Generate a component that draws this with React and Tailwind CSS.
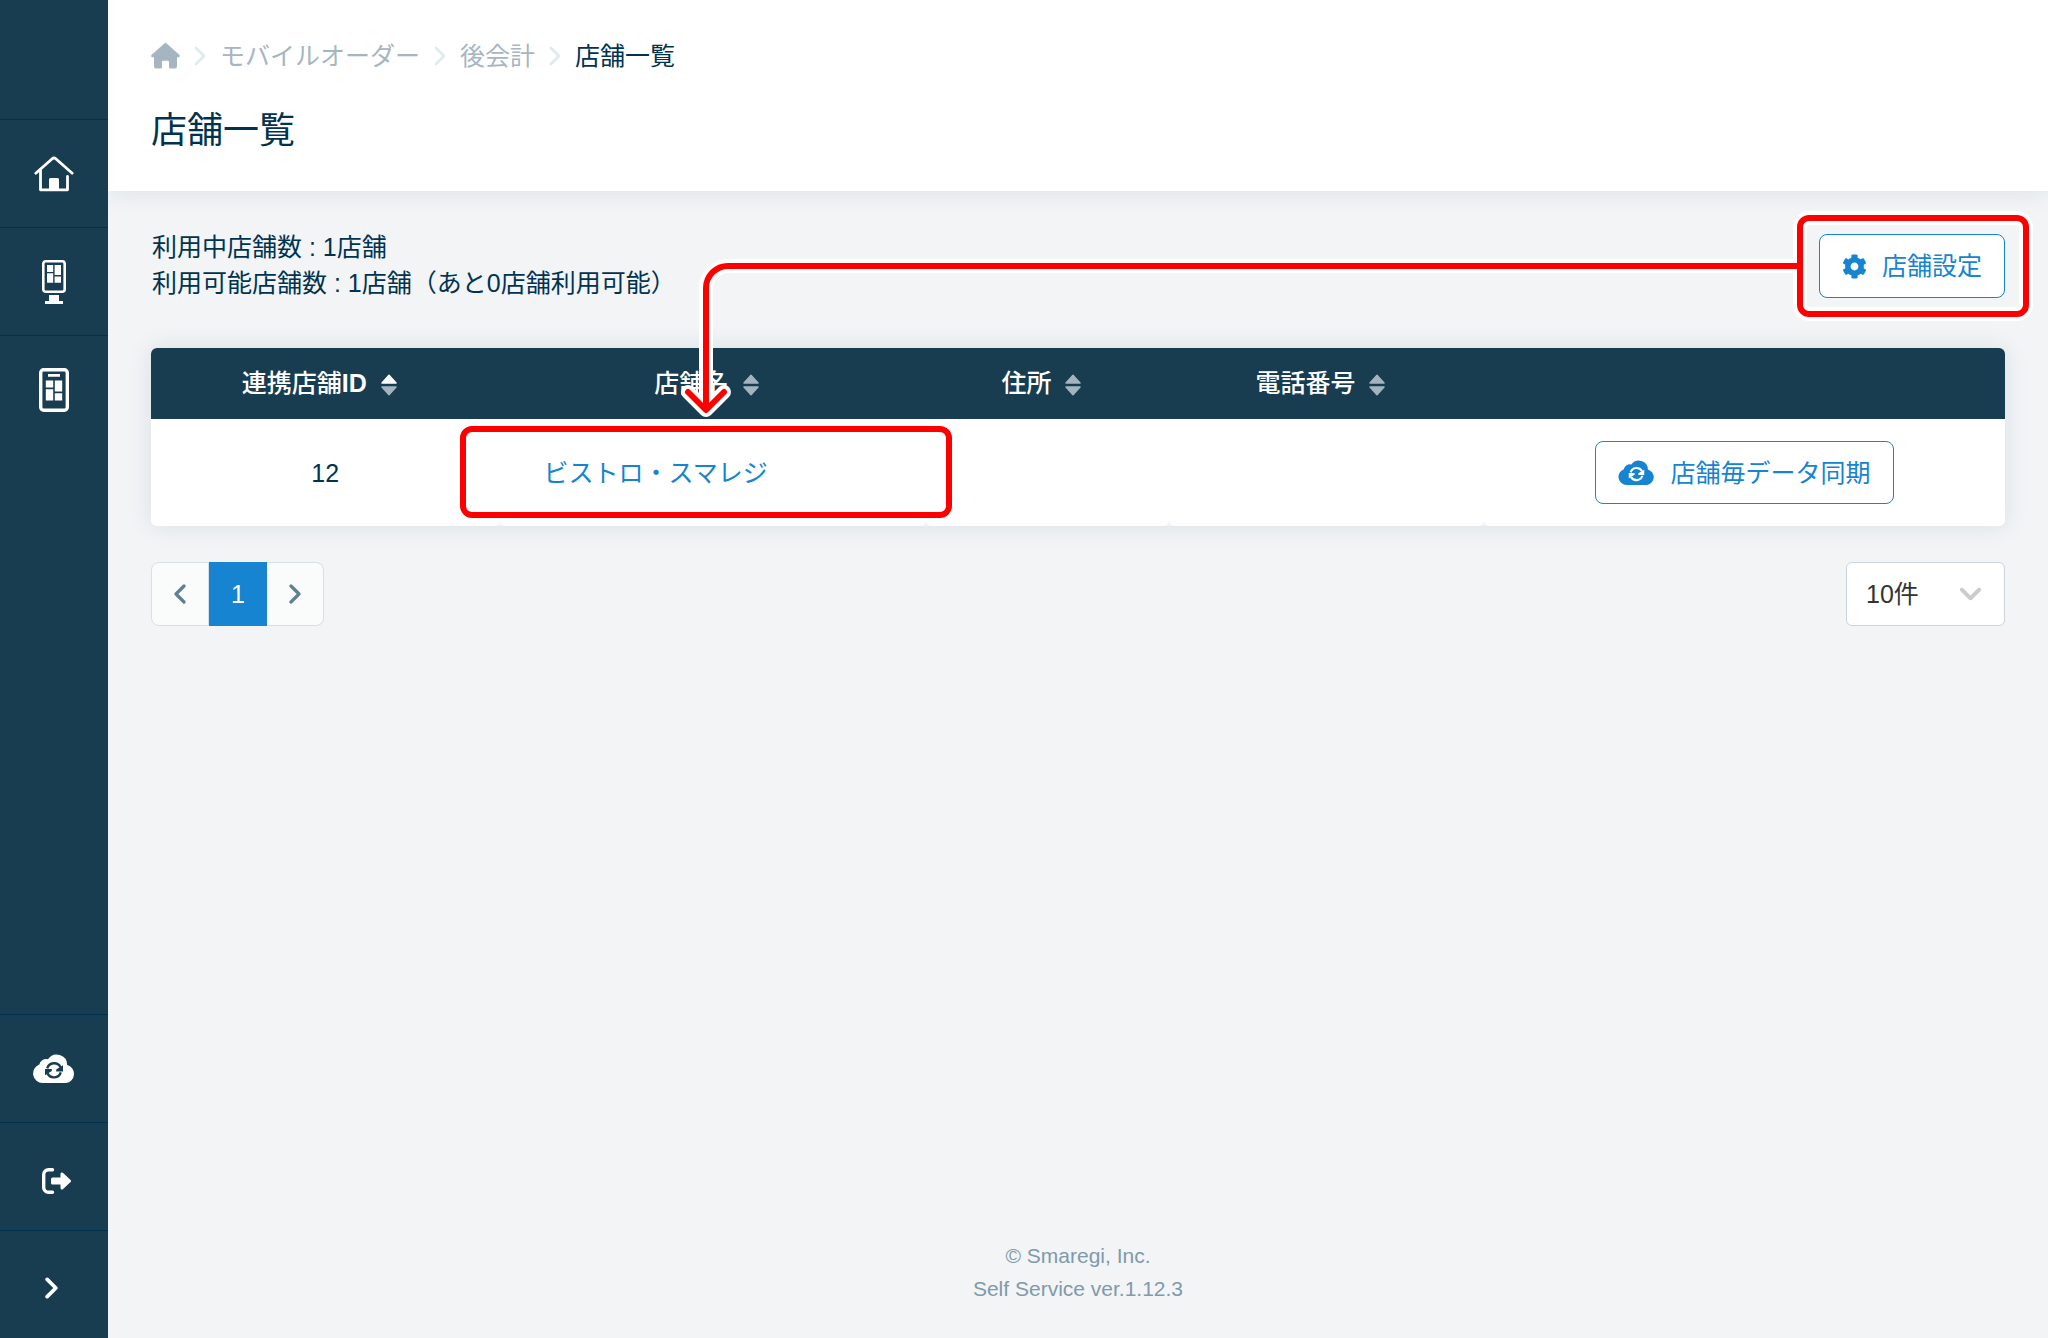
import React, { useState } from 'react';
import { FaCog } from 'react-icons/fa';

const HomeIcon = () => (
  <svg width="40" height="36" viewBox="0 0 40 36" fill="none" stroke="white" strokeWidth="2.8" strokeLinecap="round" strokeLinejoin="round">
    <path d="M1.8 17.2 18.2 2.800a2.700 2.700 0 0 1 3.600 0L38.200 17.200" />
    <path d="M6.500 14v19.800h27V20.500" />
    <path d="M15 35V23.500a1.500 1.500 0 0 1 1.500-1.500h7a1.500 1.500 0 0 1 1.500 1.500V35z" fill="white" stroke="none" />
  </svg>
);

const KioskIcon = () => (
  <svg width="24" height="44" viewBox="0 0 24 44" fill="white">
    <rect x="1.3" y="1.3" width="21.4" height="30.4" rx="2.5" fill="none" stroke="white" strokeWidth="2.600" />
    <path d="M5 5h6.200v7H5zM12.600 5h6.400v10h-6.400zM5 13.300h6.200v9.500H5zM12.600 16.500h6.400v6.300h-6.400z" />
    <path d="M7 35h10v6h4v3H3v-3h4z" />
  </svg>
);

const MobileIcon = () => (
  <svg width="30" height="44" viewBox="0 0 30 44" fill="white">
    <rect x="1.700" y="1.700" width="26.600" height="40.600" rx="3" fill="none" stroke="white" strokeWidth="3.400" />
    <path d="M9 6h12v2.800H9zM6.800 12.500h7.400v7H6.800zM15.800 12.500h7.400v11h-7.400zM6.800 21.300h7.400v11.200H6.800zM15.800 25.300h7.400v7.200h-7.400z" />
  </svg>
);

const LogoutIcon = () => (
  <svg width="30" height="26" viewBox="0 0 30 26" fill="none">
    <path d="M10.500 1.700H6.500a4.800 4.800 0 0 0-4.800 4.800v13a4.800 4.800 0 0 0 4.800 4.800h4" stroke="white" strokeWidth="3.400" strokeLinecap="round" />
    <path d="M10.500 9.500h8V6a1.500 1.500 0 0 1 2.600-1l7.500 7a1.400 1.400 0 0 1 0 2l-7.500 7a1.500 1.500 0 0 1-2.600-1v-3.500h-8a1.500 1.500 0 0 1-1.500-1.500v-4a1.500 1.500 0 0 1 1.500-1.500z" fill="white" />
  </svg>
);

const HouseIcon = () => (
  <svg width="29" height="26" viewBox="0 0 29 26" fill="currentColor">
    <path d="M13.300.5a1.800 1.800 0 0 1 2.400 0L28.300 11.800c1 .9.500 2.500-1 2.500H26V23.500a2 2 0 0 1-2 2h-4.500a1.500 1.500 0 0 1-1.500-1.500v-5a1.200 1.200 0 0 0-1.200-1.200h-4.600A1.200 1.200 0 0 0 11 19v5a1.500 1.500 0 0 1-1.500 1.500H5a2 2 0 0 1-2-2V14.300H1.700c-1.500 0-2-1.600-1-2.500z" />
  </svg>
);

const CloudSync = ({ width, height, arrows }) => (
  <svg width={width} height={height} viewBox="0 0 42 29">
    <path d="M9.500 29A9.500 9.500 0 0 1 6.300 10.600A7 7 0 0 1 15 5.200A10.500 10.500 0 0 1 34.200 11A9.200 9.200 0 0 1 33 29z" fill="currentColor" />
    <g className={arrows} strokeWidth="2.400">
      <path d="M14.200 14.300A7.200 7.200 0 0 1 27.500 13.200M27.800 18.300A7.200 7.200 0 0 1 14.500 19.400" fill="none" />
      <path d="M30 11.300v6.200h-6.800v-2zM12 21.300v-6.200h6.800v2z" stroke="none" />
    </g>
  </svg>
);

// right-pointing by default, rotate with a class for the other directions
const Chevron = ({ width, height, stroke, className }) => (
  <svg width={width} height={height} viewBox="0 0 12 20" fill="none" stroke="currentColor" strokeWidth={stroke} strokeLinecap="round" strokeLinejoin="round" className={className}>
    <path d="M2 2l8 8-8 8" />
  </svg>
);

const SortIcon = ({ active }) => (
  <svg width="16" height="22" viewBox="0 0 16 22" strokeWidth="1.500" strokeLinejoin="round" className="mt-1">
    <path d="M8 1.200 15 9H1z" fill={active ? '#fff' : '#a3b4c0'} stroke={active ? '#fff' : '#a3b4c0'} />
    <path d="M8 20.800 15 13H1z" fill="#a3b4c0" stroke="#a3b4c0" />
  </svg>
);

const topMenu = [
  { label: 'ホーム', icon: <HomeIcon /> },
  { label: 'セルフレジ', icon: <KioskIcon /> },
  { label: 'モバイルオーダー', icon: <MobileIcon /> },
];

const bottomMenu = [
  { label: 'データ同期', icon: <CloudSync width={42} height={29} arrows="fill-[#183c50] stroke-[#183c50]" /> },
  { label: 'ログアウト', icon: <span className="ml-1.5 mt-2"><LogoutIcon /></span> },
  { label: 'メニューを開く', icon: <Chevron width={13} height={22} stroke={3.4} className="mr-1.5 mt-1.5" /> },
];

const columns = [
  { label: '連携店舗', suffix: 'ID', width: 'w-[18.8%]', active: true },
  { label: '店舗名', width: 'w-[23%]' },
  { label: '住所', width: 'w-[13.1%]' },
  { label: '電話番号', width: 'w-[17%]' },
];

const arrow = 'M1797 266H728a22 22 0 0 0-22 22V409M688 392l18 18 18-18';

const Guide = () => (
  <svg className="pointer-events-none absolute top-0 right-0 z-20" width="2048" height="540" viewBox="0 0 2048 540" fill="none" strokeLinecap="round" strokeLinejoin="round">
    <g stroke="white" strokeWidth="14">
      <rect x="1800" y="218" width="226" height="96" rx="9" />
      <rect x="463" y="429" width="486" height="86" rx="9" />
      <path d={arrow} />
    </g>
    <g stroke="#ff0000" strokeWidth="6">
      <rect x="1800" y="218" width="226" height="96" rx="9" />
      <rect x="463" y="429" width="486" height="86" rx="9" />
      <path d={arrow} />
    </g>
  </svg>
);

const SideButton = ({ label, icon }) => (
  <button type="button" aria-label={label} className="flex h-[108px] w-full items-center justify-center border-t border-[#00324f]">
    {icon}
  </button>
);

const Separator = () => (
  <span className="flex w-5 justify-center text-[#e0e9eb]">
    <Chevron width={12} height={20} stroke={2.8} />
  </span>
);

const App = () => {
  const [perPage, setPerPage] = useState('10');

  return (
    <div className="relative flex min-h-screen bg-[#f2f4f6] text-[25px] leading-9 text-[#003350] font-['Liberation_Sans','Noto_Sans_CJK_JP',sans-serif]">
      <aside className="relative z-10 flex w-[108px] shrink-0 flex-col justify-between bg-[#183c50] text-white">
        <nav className="pt-[119px]">
          {topMenu.map((item) => (
            <SideButton key={item.label} {...item} />
          ))}
        </nav>
        <nav>
          {bottomMenu.map((item) => (
            <SideButton key={item.label} {...item} />
          ))}
        </nav>
      </aside>

      <div className="flex min-w-0 flex-1 flex-col">
        <header className="bg-white px-[43px] pt-[38px] pb-[35px] shadow-[0_0_24px_rgba(24,60,80,0.1)]">
          <nav className="flex items-center gap-2.5 text-[#a6b6c1]">
            <a href="#home" aria-label="ホーム"><HouseIcon /></a>
            <Separator />
            <a href="#mobile">モバイルオーダー</a>
            <Separator />
            <a href="#after">後会計</a>
            <Separator />
            <span className="text-[#003350]">店舗一覧</span>
          </nav>
          <h1 className="mt-[31px] text-4xl leading-[51px]">店舗一覧</h1>
        </header>

        <main className="flex-1 px-[43px] pt-[37px]">
          <div className="flex items-start justify-between">
            <div className="pt-px pl-px">
              <p>利用中店舗数 : 1店舗</p>
              <p>利用可能店舗数 : 1店舗（あと0店舗利用可能）</p>
            </div>
            <button type="button" className="mt-1.5 flex h-16 items-center gap-[15px] rounded-lg border border-[#1684d0] bg-white px-[22px] text-[#1684d0]">
              <FaCog size={25} />
              店舗設定
            </button>
          </div>

          <table className="mt-[47px] w-full table-fixed border-separate border-spacing-0 rounded-md shadow-[0_0_24px_rgba(24,60,80,0.1)]">
            <thead className="bg-[#183c50] text-white">
              <tr>
                {columns.map((col, i) => (
                  <th key={col.label} className={`h-[71px] pb-0.5 font-medium ${col.width} ${i === 0 ? 'rounded-tl-md' : ''}`}>
                    <span className="flex items-center justify-center gap-3.5 pr-3">
                      <span>{col.label}{col.suffix && <b>{col.suffix}</b>}</span>
                      <SortIcon active={col.active} />
                    </span>
                  </th>
                ))}
                <th className="rounded-tr-md" />
              </tr>
            </thead>
            <tbody>
              <tr className="text-center">
                <td className="h-[107px] rounded-b-md bg-white">12</td>
                <td className="rounded-b-md bg-white pl-11 text-left">
                  <a href="#store" className="text-[#1684d0]">ビストロ・スマレジ</a>
                </td>
                <td className="rounded-b-md bg-white" />
                <td className="rounded-b-md bg-white" />
                <td className="rounded-b-md bg-white">
                  <button type="button" className="inline-flex h-[63px] items-center gap-[15px] rounded-lg border border-[#1684d0] px-[22px] align-middle text-[#1684d0]">
                    <CloudSync width={37} height={25} arrows="fill-white stroke-white" />
                    店舗毎データ同期
                  </button>
                </td>
              </tr>
            </tbody>
          </table>

          <div className="mt-9 flex justify-between">
            <nav className="flex h-16 text-[#5f8093]">
              <button type="button" aria-label="前へ" className="flex w-[58px] items-center justify-center rounded-l-lg border border-[#d9e0e5] bg-[#fafcfc]">
                <Chevron width={12} height={20} stroke={3.2} className="rotate-180" />
              </button>
              <button type="button" className="w-[58px] bg-[#1684d0] text-white">1</button>
              <button type="button" aria-label="次へ" className="flex w-[57px] items-center justify-center rounded-r-lg border border-l-0 border-[#d9e0e5] bg-[#fafcfc]">
                <Chevron width={12} height={20} stroke={3.2} />
              </button>
            </nav>
            <div className="relative">
              <select
                aria-label="表示件数"
                value={perPage}
                onChange={(e) => setPerPage(e.target.value)}
                className="h-16 w-[159px] appearance-none rounded-md border border-[#cbd5dd] bg-white pl-[19px] text-[#333]"
              >
                <option value="10">10件</option>
                <option value="50">50件</option>
              </select>
              <Chevron width={13} height={22} stroke={3.8} className="pointer-events-none absolute top-[21px] right-7 rotate-90 text-[#ccc]" />
            </div>
          </div>
        </main>

        <footer className="pb-[33px] text-center text-[21px] leading-[33px] text-[#7f9aaa]">
          <p>© Smaregi, Inc.</p>
          <p>Self Service ver.1.12.3</p>
        </footer>
      </div>

      <Guide />
    </div>
  );
};

export default App;
